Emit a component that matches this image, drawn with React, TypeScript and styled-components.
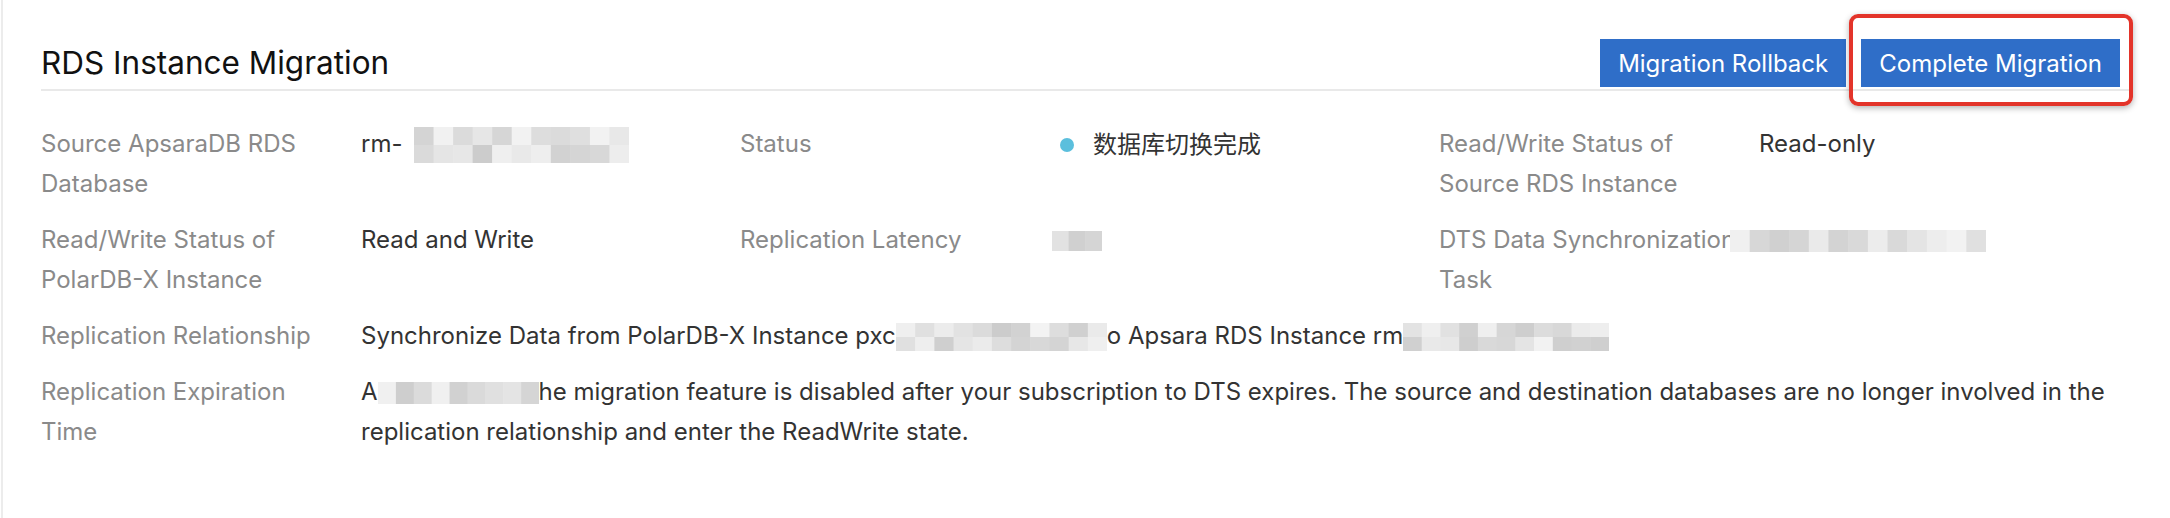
import React from "react";
import styled, { createGlobalStyle } from "styled-components";

const GlobalStyle = createGlobalStyle`
  *{
    box-sizing:border-box;
  }
  body{
    margin:0;
    padding:0;
    background:#fff;
    font-family: Inter, "Noto Sans CJK SC", sans-serif;
    -webkit-font-smoothing: antialiased;
  }
`;

const Card = styled.section`
  min-height: 100vh;
  margin-left: 1px;
  border-left: 2px solid #ececec;
  padding: 0 40px 40px 38px;
`;

const Header = styled.header`
  display: flex;
  align-items: center;
  justify-content: space-between;
  padding: 39px 10px 2px 0;
  border-bottom: 2px solid #e9e9e9;
`;

const Title = styled.h2`
  margin: 0;
  font-size: 31.5px;
  font-weight: 400;
  line-height: 48px;
  color: #111;
`;

const Actions = styled.div`
  display: flex;
  align-items: center;
  gap: 15px;
`;

const Button = styled.button`
  height: 48px;
  padding: 0 18px;
  border: 0;
  border-radius: 0;
  background: #2f6ec8;
  color: #fff;
  font-family: inherit;
  font-size: 24px;
  cursor: pointer;
`;

// red annotation frame drawn over the button
const Highlight = styled.span`
  position: relative;
  display: inline-flex;
  &::after {
    content: "";
    position: absolute;
    top: -25px;
    left: -12px;
    right: -13px;
    bottom: -19px;
    border: 4px solid #e3342a;
    border-radius: 9px;
    box-shadow: 0 2px 6px rgba(0, 0, 0, 0.3);
    pointer-events: none;
  }
`;

const Details = styled.dl`
  margin: 33px 0 0;
  display: grid;
  grid-template-columns: 320px 379px 320px 379px 320px 1fr;
  row-gap: 16px;
  font-size: 24px;
  line-height: 40px;
`;

const Label = styled.dt`
  margin: 0;
  padding-right: 26px;
  color: #8a8a8a;
`;

const NoWrap = styled.span`
  white-space: nowrap;
`;

const Value = styled.dd<{ $wide?: boolean }>`
  margin: 0;
  color: #333;
  grid-column: ${(p) => (p.$wide ? "2 / -1" : "auto")};
`;

const Status = styled.span`
  display: inline-flex;
  align-items: center;
  gap: 19px;
`;

const Dot = styled.i`
  display: inline-block;
  width: 14px;
  height: 14px;
  border-radius: 50%;
  background: #5bbfdd;
`;

const MosaicSvg = styled.svg<{ $shift: number }>`
  display: inline-block;
  vertical-align: middle;
  margin-left: ${(p) => p.$shift}px;
`;

interface IMosaic {
  width: number;
  height: number;
  seed: number;
  shift?: number;
}

function Mosaic({ width, height, seed, shift = 0 }: IMosaic) {
  const cols = Math.ceil(width / 20);
  const rows = Math.max(1, Math.round(height / 18));
  const cw = width / cols;
  const rh = height / rows;
  let s = seed * 9301 + 49297;
  const rects = [];
  for (let r = 0; r < rows; r++) {
    for (let c = 0; c < cols; c++) {
      s = (s * 9301 + 49297) % 233280;
      const g = 204 + Math.floor((s / 233280) * 40);
      rects.push(
        <rect
          key={`${r}-${c}`}
          x={c * cw}
          y={r * rh}
          width={cw + 0.5}
          height={rh + 0.5}
          fill={`rgb(${g},${g},${g})`}
        />
      );
    }
  }
  return (
    <MosaicSvg $shift={shift} width={width} height={height}>
      {rects}
    </MosaicSvg>
  );
}

export default function App() {
  return (
    <>
      <GlobalStyle />
      <Card>
        <Header>
          <Title>RDS Instance Migration</Title>
          <Actions>
            <Button>Migration Rollback</Button>
            <Highlight>
              <Button>Complete Migration</Button>
            </Highlight>
          </Actions>
        </Header>
        <Details>
          <Label>Source ApsaraDB RDS Database</Label>
          <Value>
            rm-
            <Mosaic width={215} height={36} seed={3} shift={12} />
          </Value>
          <Label>Status</Label>
          <Value>
            <Status>
              <Dot />
              数据库切换完成
            </Status>
          </Value>
          <Label>Read/Write Status of Source RDS Instance</Label>
          <Value>Read-only</Value>

          <Label>Read/Write Status of PolarDB-X Instance</Label>
          <Value>Read and Write</Value>
          <Label>Replication Latency</Label>
          <Value>
            <Mosaic width={50} height={20} seed={7} shift={-8} />
          </Value>
          <Label>
            <NoWrap>DTS Data Synchronization</NoWrap> Task
          </Label>
          <Value>
            <Mosaic width={256} height={22} seed={11} shift={-29} />
          </Value>

          <Label>Replication Relationship</Label>
          <Value $wide>
            Synchronize Data from PolarDB-X Instance pxc
            <Mosaic width={211} height={28} seed={5} />o Apsara RDS Instance rm
            <Mosaic width={206} height={28} seed={13} />
          </Value>

          <Label>Replication Expiration Time</Label>
          <Value $wide>
            A<Mosaic width={161} height={22} seed={17} />
            he migration feature is disabled after your subscription to DTS
            expires. The source and destination databases are no longer
            involved in the replication relationship and enter the ReadWrite
            state.
          </Value>
        </Details>
      </Card>
    </>
  );
}
